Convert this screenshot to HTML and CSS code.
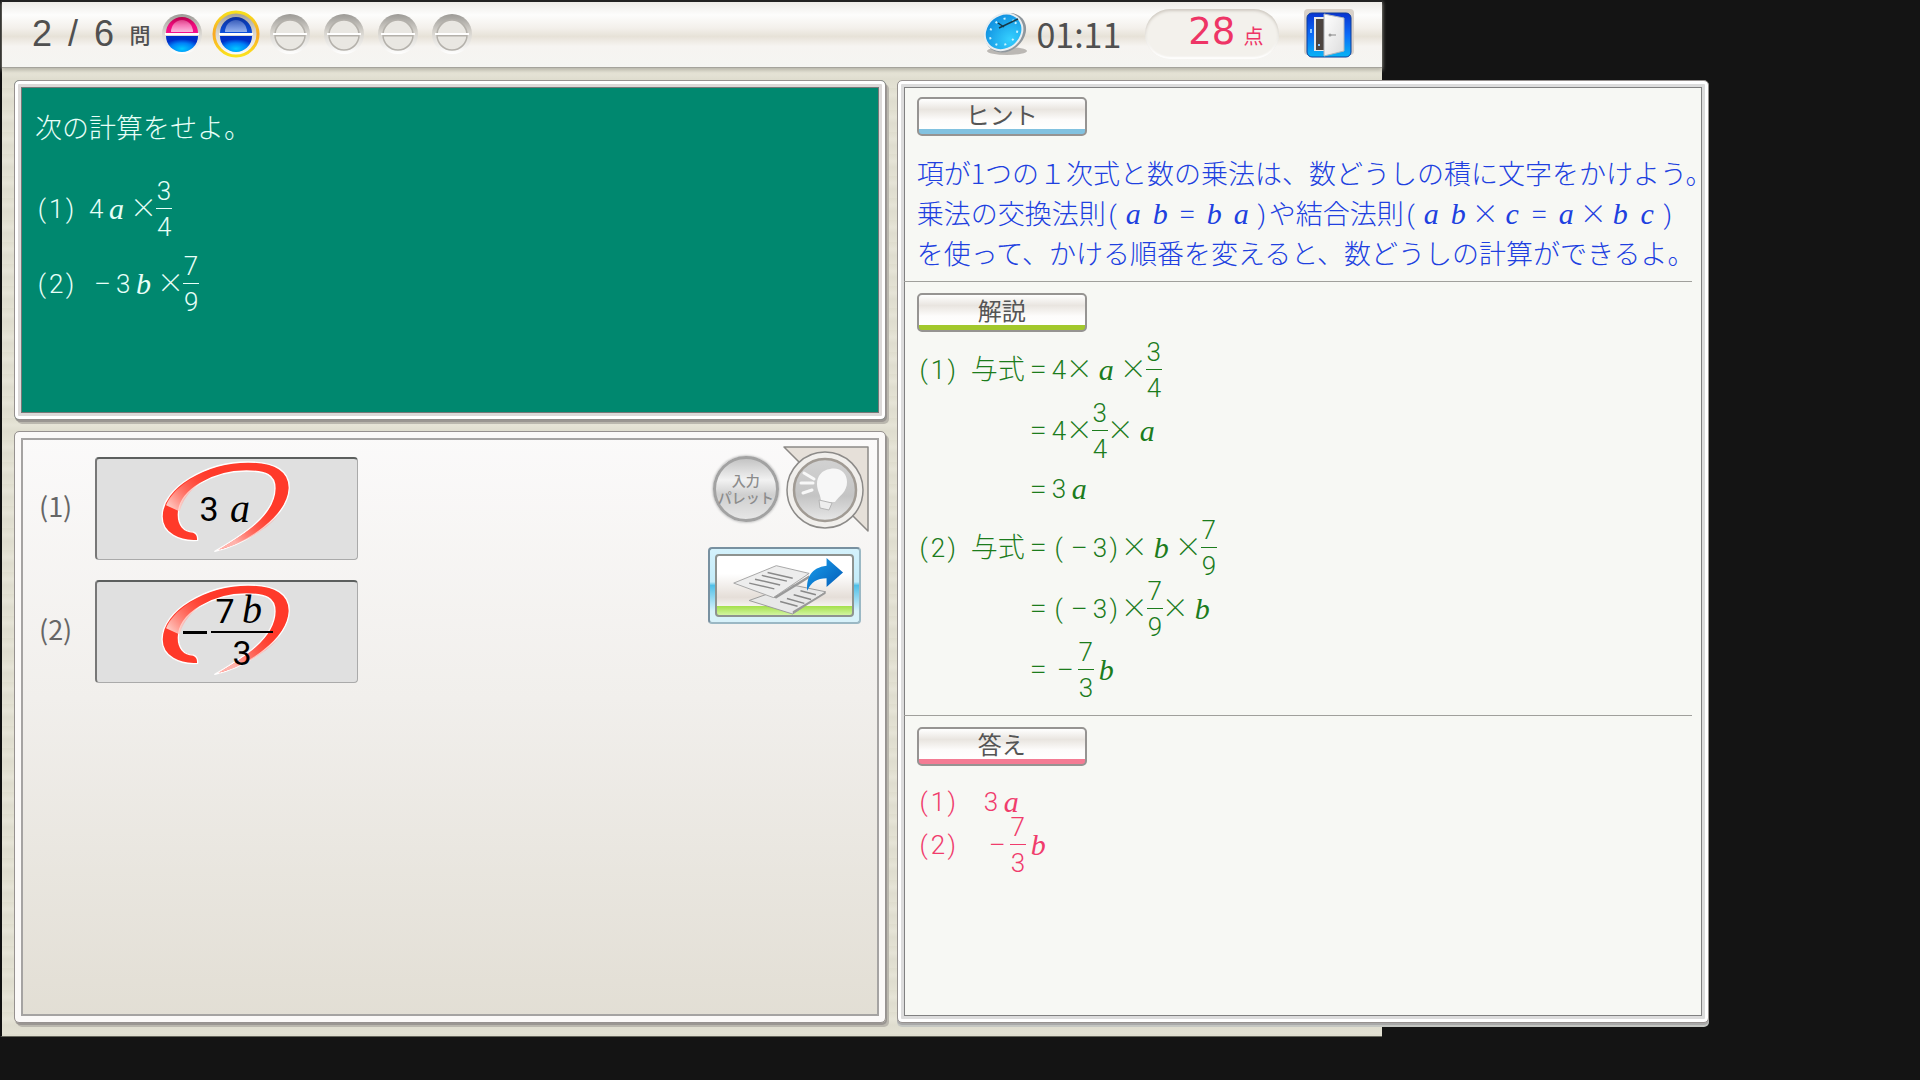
FILE: index.html
```html
<!DOCTYPE html>
<html lang="ja">
<head>
    <meta charset="UTF-8">
    <meta name="viewport" content="width=device-width, initial-scale=1.0">
    <title>計算ドリル</title>
    <link rel="stylesheet" href="styles.css">
</head>
<body>
    <!-- shared shapes -->
    <svg class="defs" width="0" height="0" aria-hidden="true">
        <defs>
            <linearGradient id="pink" x1="0" y1="0" x2="0" y2="1">
                <stop offset="0" stop-color="#b8004c"/>
                <stop offset="0.5" stop-color="#ee0a7c"/>
                <stop offset="1" stop-color="#f5108c"/>
            </linearGradient>
            <linearGradient id="blue" x1="0" y1="0" x2="0" y2="1">
                <stop offset="0" stop-color="#0a2f9c"/>
                <stop offset="1" stop-color="#0c50dc"/>
            </linearGradient>
            <radialGradient id="blueLow" cx="0.5" cy="0.8" r="0.6">
                <stop offset="0" stop-color="#00c8ff"/>
                <stop offset="0.6" stop-color="#0080f8"/>
                <stop offset="1" stop-color="#0030c8"/>
            </radialGradient>
            <linearGradient id="shine" x1="0" y1="0" x2="0" y2="1">
                <stop offset="0" stop-color="#fff" stop-opacity="0.25"/>
                <stop offset="1" stop-color="#fff" stop-opacity="0.7"/>
            </linearGradient>
            <linearGradient id="socket" x1="0" y1="0" x2="0" y2="1">
                <stop offset="0" stop-color="#9c9a96"/>
                <stop offset="0.45" stop-color="#d6d3cd"/>
                <stop offset="1" stop-color="#ffffff"/>
            </linearGradient>
            <linearGradient id="gold" x1="0" y1="0" x2="0" y2="1">
                <stop offset="0" stop-color="#f7e01c"/>
                <stop offset="0.5" stop-color="#f9a825"/>
                <stop offset="1" stop-color="#fbe31e"/>
            </linearGradient>
            <linearGradient id="fadeTop" gradientUnits="userSpaceOnUse" x1="510" y1="325" x2="640" y2="215">
                <stop offset="0" stop-color="#ffd8d2" stop-opacity="0.9"/>
                <stop offset="1" stop-color="#ff3a2a" stop-opacity="0"/>
            </linearGradient>
            <linearGradient id="fadeTail" gradientUnits="userSpaceOnUse" x1="700" y1="420" x2="820" y2="315">
                <stop offset="0" stop-color="#ffc0ba" stop-opacity="0.9"/>
                <stop offset="1" stop-color="#ff3a2a" stop-opacity="0"/>
            </linearGradient>
        </defs>
        <symbol id="empty" viewBox="0 0 48 48">
            <circle cx="24" cy="24" r="20" fill="url(#socket)"/>
            <circle cx="24" cy="25" r="15" fill="#e9e7e2" stroke="#b4b1ab" stroke-width="1.5"/>
            <path d="M9 25h30" stroke="#b4b1ab" stroke-width="3"/>
            <path d="M7 24h34" stroke="#fff" stroke-width="2"/>
        </symbol>
        <symbol id="maru" viewBox="480 180 400 280">
            <path d="M593 422C540 426 486 402 486 350C486 262 620 186 745 186C830 186 870 215 869 265C865 350 740 434 645 455C720 410 825 350 826 265C826 225 800 213 740 213C640 213 535 270 535 345C535 375 550 396 580 397Q595 402 593 422Z" fill="#ff3a2a" stroke="#fff" stroke-width="4" stroke-linejoin="round"/>
            <path d="M498 316C520 262 590 222 650 200L670 219C610 232 555 275 539 335Z" fill="url(#fadeTop)"/>
            <path d="M847 335C800 395 720 434 654 451C720 412 790 365 815 320Z" fill="url(#fadeTail)"/>
        </symbol>
    </svg>

    <div class="app">
        <header>
            <div class="progress">
                <div class="count"><span>2</span><span>/</span><span>6</span></div>
                <span class="unit">問</span>
                <svg class="ball" viewBox="0 0 48 48">
                    <circle cx="24" cy="24" r="20" fill="url(#socket)"/>
                    <path d="M8 23a16 16 0 0 1 32 0z" fill="url(#pink)"/>
                    <path d="M8 26a16 16 0 0 0 32 0z" fill="url(#blueLow)"/>
                    <path d="M13 22a11 12 0 0 1 22 0z" fill="url(#shine)"/>
                    <path d="M7 24h34" stroke="#fff" stroke-width="2"/>
                </svg>
                <svg class="ball" viewBox="0 0 48 48">
                    <circle cx="24" cy="24" r="22" fill="url(#socket)" stroke="url(#gold)" stroke-width="3"/>
                    <path d="M8 23a16 16 0 0 1 32 0z" fill="url(#blue)"/>
                    <path d="M8 26a16 16 0 0 0 32 0z" fill="url(#blueLow)"/>
                    <path d="M13 22a11 12 0 0 1 22 0z" fill="url(#shine)" opacity="0.8"/>
                    <path d="M7 24h34" stroke="#fff" stroke-width="2"/>
                </svg>
                <svg class="ball"><use href="#empty"/></svg>
                <svg class="ball"><use href="#empty"/></svg>
                <svg class="ball"><use href="#empty"/></svg>
                <svg class="ball"><use href="#empty"/></svg>
            </div>
            <div class="status">
                <svg class="clock" viewBox="0 0 44 46">
                    <defs>
                        <radialGradient id="dial" cx="0.5" cy="0.8" r="0.8">
                            <stop offset="0" stop-color="#35d0ff"/>
                            <stop offset="1" stop-color="#1090e0"/>
                        </radialGradient>
                    </defs>
                    <ellipse cx="23" cy="40" rx="20" ry="4" fill="#bbb8b4"/>
                    <g transform="rotate(-40 21 21)">
                        <ellipse cx="21" cy="22" rx="22" ry="18" fill="#8f979d"/>
                        <ellipse cx="20" cy="20" rx="21" ry="18" fill="#e8edf0"/>
                        <ellipse cx="20" cy="20" rx="19" ry="16" fill="url(#dial)"/>
                        <ellipse cx="20" cy="20" rx="15" ry="12" fill="none" stroke="#c8f2ff" stroke-width="2" stroke-dasharray="2 7"/>
                    </g>
                    <path d="M14 12l6 4M15 17l19-9" stroke="#153848" stroke-width="1.5"/>
                </svg>
                <span class="time">01:11</span>
                <div class="score"><strong>28</strong><span>点</span></div>
                <button class="exit" type="button" aria-label="終了">
                    <svg viewBox="0 0 50 50">
                        <defs>
                            <linearGradient id="exitBg" x1="0" y1="0" x2="0" y2="1">
                                <stop offset="0" stop-color="#0a34d0"/>
                                <stop offset="0.5" stop-color="#0a6cf8"/>
                                <stop offset="1" stop-color="#08b4f4"/>
                            </linearGradient>
                            <linearGradient id="doorBg" x1="0" y1="0" x2="1" y2="1">
                                <stop offset="0" stop-color="#fff"/>
                                <stop offset="1" stop-color="#dcdcdc"/>
                            </linearGradient>
                        </defs>
                        <rect width="50" height="46" rx="4" fill="#d8d1c9"/>
                        <rect x="3" y="4" width="44" height="44" rx="5" fill="url(#exitBg)" stroke="#0c3c9c"/>
                        <path d="M10 8h27v34H10z" fill="#e8e8e8"/>
                        <path d="M12 10h10v31H12z" fill="#4c4440"/>
                        <path d="M20 5l20 4v33l-20 5z" fill="url(#doorBg)" stroke="#aeb4bc"/>
                        <path d="M26 26h6" stroke="#888" stroke-width="1"/>
                        <circle cx="26" cy="26" r="1.5" fill="#999"/>
                        <path d="M7 20v4M15 35v2" stroke="#8cc8ff" stroke-width="2"/>
                    </svg>
                </button>
            </div>
        </header>

        <main>
            <div class="left">
                <section class="panel board">
                    <p class="lead">次の計算をせよ。</p>
                    <div class="line">
                        <span class="no"><b>(</b><b>1</b><b>)</b></span><b>4</b><i>a</i><span class="op">×</span><span class="frac"><b>3</b><b>4</b></span>
                    </div>
                    <div class="line">
                        <span class="no"><b>(</b><b>2</b><b>)</b></span><span class="op">−</span><b>3</b><i>b</i><span class="op">×</span><span class="frac"><b>7</b><b>9</b></span>
                    </div>
                </section>

                <section class="panel work">
                    <div class="answers">
                        <div class="row">
                            <span class="row-no">(1)</span>
                            <div class="box">
                                <svg class="maru"><use href="#maru"/></svg>
                                <div class="value"><b>3</b><i>a</i></div>
                            </div>
                        </div>
                        <div class="row">
                            <span class="row-no">(2)</span>
                            <div class="box">
                                <svg class="maru"><use href="#maru"/></svg>
                                <div class="value">
                                    <span class="minus"></span>
                                    <span class="big-frac">
                                        <span><b>7</b><i>b</i></span>
                                        <span><b>3</b></span>
                                    </span>
                                </div>
                            </div>
                        </div>
                    </div>
                    <div class="tools">
                        <div class="tool-row">
                            <button class="palette" type="button"><span>入力</span><span>パレット</span></button>
                            <button class="bulb" type="button" aria-label="ヒント">
                                <svg viewBox="0 0 86 86">
                                    <defs>
                                        <linearGradient id="disc" x1="0" y1="0" x2="0" y2="1">
                                            <stop offset="0" stop-color="#d2d2d2"/>
                                            <stop offset="0.6" stop-color="#c4c4c4"/>
                                            <stop offset="1" stop-color="#e8e8e8"/>
                                        </linearGradient>
                                    </defs>
                                    <path d="M1 1h84v84z" fill="#e6e0d9" stroke="#8c8986" stroke-width="1.5" stroke-linejoin="round"/>
                                    <circle cx="42" cy="44" r="38" fill="#f1efec" stroke="#8c8a88" stroke-width="1.5"/>
                                    <circle cx="42" cy="44" r="31" fill="url(#disc)" stroke="#a19b94" stroke-width="2.5"/>
                                    <path d="M47 23c10-2 17 4 17 13 0 10-7 13-12 20h-14c0-7-4-11-4-18 0-8 5-14 13-15z" fill="#f7f7f7"/>
                                    <path d="M36 54l13 3-3 7-9-2z" fill="#eee" stroke="#b5b5b5"/>
                                    <path d="M21 27l10 6M18 37h12M20 47l9-3" stroke="#f8f8f8" stroke-width="3" stroke-linecap="round"/>
                                </svg>
                            </button>
                        </div>
                        <button class="submit" type="button" aria-label="提出">
                            <svg viewBox="0 0 137 61">
                                <defs>
                                    <linearGradient id="arrow" x1="0" y1="0" x2="1" y2="1">
                                        <stop offset="0" stop-color="#18a0ee"/>
                                        <stop offset="1" stop-color="#0458b4"/>
                                    </linearGradient>
                                </defs>
                                <path d="M32 46l45-16 34 7-34 23z" fill="#e8e8e8" stroke="#999"/>
                                <path d="M77 60l34-21v-2L77 57z" fill="#999"/>
                                <path d="M64 47l18 5M71 44l18 5M78 40l18 5M85 36l16 4" stroke="#888" stroke-width="1.5"/>
                                <path d="M16 28l44-18 34 8-37 25z" fill="#ededed" stroke="#a5a5a5"/>
                                <path d="M57 43l37-23v3L60 44z" fill="#999"/>
                                <path d="M32 28l26 6M38 24l26 6M45 20l26 6M51 17l26 6" stroke="#8a8a8a" stroke-width="1.5"/>
                                <path d="M92 36c-1-14 4-24 20-26V2l17 15-17 15v-9c-10 0-16 4-20 13z" fill="url(#arrow)"/>
                            </svg>
                        </button>
                    </div>
                </section>
            </div>

            <aside class="panel guide">
                <section class="hint">
                    <h2>ヒント</h2>
                    <p>項が1つの１次式と数の乗法は、数どうしの積に文字をかけよう。</p>
                    <p>乗法の交換法則<b>(</b><i>a</i><i>b</i><span class="op">=</span><i>b</i><i>a</i><b>)</b>や結合法則<b>(</b><i>a</i><i>b</i><span class="op">×</span><i>c</i><span class="op">=</span><i>a</i><span class="op">×</span><i>b</i><i>c</i><b>)</b></p>
                    <p>を使って、かける順番を変えると、数どうしの計算ができるよ。</p>
                </section>
                <section class="explain">
                    <h2>解説</h2>
                    <div class="line">
                        <span class="no"><b>(</b><b>1</b><b>)</b></span><span class="given">与式</span><span class="op">=</span><b>4</b><span class="op">×</span><i>a</i><span class="op">×</span><span class="frac"><b>3</b><b>4</b></span>
                    </div>
                    <div class="line step">
                        <span class="op">=</span><b>4</b><span class="op">×</span><span class="frac"><b>3</b><b>4</b></span><span class="op">×</span><i>a</i>
                    </div>
                    <div class="line step plain">
                        <span class="op">=</span><b>3</b><i>a</i>
                    </div>
                    <div class="line">
                        <span class="no"><b>(</b><b>2</b><b>)</b></span><span class="given">与式</span><span class="op">=</span><b>(</b><span class="op">−</span><b>3</b><b>)</b><span class="op">×</span><i>b</i><span class="op">×</span><span class="frac"><b>7</b><b>9</b></span>
                    </div>
                    <div class="line step">
                        <span class="op">=</span><b>(</b><span class="op">−</span><b>3</b><b>)</b><span class="op">×</span><span class="frac"><b>7</b><b>9</b></span><span class="op">×</span><i>b</i>
                    </div>
                    <div class="line step">
                        <span class="op">=</span><span class="op">−</span><span class="frac"><b>7</b><b>3</b></span><i>b</i>
                    </div>
                </section>
                <section class="result">
                    <h2>答え</h2>
                    <div class="line">
                        <span class="no"><b>(</b><b>1</b><b>)</b></span><b>3</b><i>a</i>
                    </div>
                    <div class="line">
                        <span class="no"><b>(</b><b>2</b><b>)</b></span><span class="op">−</span><span class="frac"><b>7</b><b>3</b></span><i>b</i>
                    </div>
                </section>
            </aside>
        </main>
    </div>
</body>
</html>
```
FILE: styles.css
```css
*{
    padding: 0;
    margin: 0;
    box-sizing: border-box;
}
body{
    background: #141414;
    font-family: "Noto Sans CJK JP", sans-serif;
    font-size: 27px;
    font-weight: 300;
}
button{
    border: none;
    background: none;
    font-family: inherit;
    cursor: pointer;
}
svg{
    display: block;
}
.defs{
    position: absolute;
}
.app{
    display: flex;
    flex-direction: column;
    width: 72vw;
    min-height: 96vh;
    border-left: 2px solid #111;
    border-bottom: 1px solid #66665c;
    background: repeating-linear-gradient(#dfddce 0, #e6e4d7 7px, #dfddcf 13px, #e3e1d3 22px);
}

/* top bar */
header{
    display: flex;
    justify-content: space-between;
    align-items: center;
    height: 68px;
    padding: 0 28px 2px 30px;
    border-top: 2px solid #222;
    border-bottom: 1px solid #a5a39c;
    background: linear-gradient(#eeece8, #fdfdfc 20%, #f3f0eb 40%, #e7e2d8 53%, #f6f4f1 68%, #f5f5f2);
    box-shadow: 0 2px 4px #b5b3a8;
    color: #505050;
}
.progress, .status{
    display: flex;
    align-items: center;
}
.count{
    display: flex;
    justify-content: space-between;
    width: 82px;
    margin-right: 8px;
    font-family: "Liberation Sans", sans-serif;
    font-size: 36px;
}
.unit{
    width: 36px;
    font-size: 21px;
    font-weight: 500;
    text-align: center;
}
.ball{
    width: 48px;
    height: 48px;
    margin-right: 6px;
}
.clock{
    width: 44px;
    height: 46px;
    margin-right: 8px;
}
.time{
    width: 109px;
    font-size: 34px;
    font-weight: 400;
    line-height: 46px;
}
.score{
    display: flex;
    justify-content: flex-end;
    align-items: baseline;
    width: 134px;
    height: 50px;
    margin-right: 25px;
    padding-right: 16px;
    border-radius: 25px;
    background: #f3f1ec;
    box-shadow: inset 0 2px 3px #cfcac2, inset 0 -2px 2px #fff;
    color: #ee3566;
    line-height: 46px;
}
.score strong{
    margin-right: 8px;
    font-family: "DejaVu Sans", sans-serif;
    font-size: 37px;
    font-weight: 400;
}
.score span{
    font-size: 20px;
    font-weight: 400;
}
.exit{
    width: 50px;
    height: 50px;
}
.status svg, .status .exit{
    flex: none;
}

/* frames */
main{
    display: flex;
    flex: 1;
    gap: 11px;
    padding: 12px 0 13px 12px;
}
.left{
    display: flex;
    flex: none;
    flex-direction: column;
    gap: 11px;
    width: 45.4vw;
}
.panel{
    padding: 8px;
    border: 1px solid #96918f;
    border-radius: 5px;
    box-shadow: inset 0 0 0 3px #fff, inset 0 0 0 6px #dcd9d8, inset 0 0 0 7px #777, 1px 2px 0 #9a9692, 3px 4px 0 #bab7ae;
}
.board{
    min-height: 340px;
    padding: 26px 20px 8px;
    background: #00886f;
    color: #e8fff8;
}
.work{
    display: flex;
    flex: 1;
    justify-content: space-between;
    align-items: flex-start;
    background: linear-gradient(#fbfafa, #f1efec 45%, #e2ded4);
    box-shadow: inset 0 0 0 6px #fbf9f8, inset 0 0 0 8px #a5a3a2, 1px 2px 0 #9a9692, 3px 4px 0 #bab7ae;
}
.guide{
    flex: none;
    width: 42.3vw;
    padding: 7px 6px;
    background: #f7f8f4;
    box-shadow: inset 0 0 0 3px #fff, inset 0 0 0 6px #dcdcdc, inset 0 0 0 7px #808080, 0 2px 0 #a9a9a9, 0 4px 0 #c4c6c2;
}

/* formulas: half-width cells for digits, full-width cells for the rest */
b, i, .op{
    display: inline-block;
    text-align: center;
    font-weight: inherit;
    line-height: 28px;
}
b{
    width: 14px;
    font-family: Roboto, sans-serif;
    font-size: 26px;
}
.op{
    width: 27px;
}
i{
    width: 27px;
    font-family: "Liberation Serif", serif;
    font-size: 30px;
}
.line{
    display: flex;
    align-items: center;
    height: 61px;
    line-height: 28px;
}
.line > .op, .given{
    padding-bottom: 3px;
}
.no{
    display: flex;
    width: 54px;
}
.frac{
    display: flex;
    flex-direction: column;
    align-items: center;
    width: 14px;
}
.frac b:first-child{
    width: 16px;
    height: 32px;
    border-bottom: 1px solid;
}
.frac b:last-child{
    height: 32px;
    padding-top: 4px;
}
.board .lead{
    margin-bottom: 24px;
    line-height: 40px;
}
.board .line{
    height: 75px;
}

/* answer area */
.answers{
    display: flex;
    flex-direction: column;
    gap: 20px;
    padding: 17px 0 0 16px;
}
.row{
    display: flex;
    align-items: center;
    color: #666;
}
.row-no{
    width: 56px;
    padding-bottom: 6px;
    font-weight: 400;
}
.box{
    position: relative;
    display: flex;
    justify-content: center;
    align-items: center;
    width: 263px;
    height: 103px;
    border: 1px solid #aaa;
    border-top: 2px solid #5c5f5e;
    border-left: 2px solid #777;
    border-radius: 4px;
    background: #e0e0e0;
    color: #000;
}
.maru{
    position: absolute;
    top: 1px;
    left: 63px;
    width: 133px;
    height: 93px;
}
.value{
    position: relative;
    display: flex;
    align-items: center;
    gap: 4px;
    padding-left: 2px;
    font-weight: 400;
}
.value b{
    width: 20px;
    font-size: 34px;
    line-height: 40px;
}
.value i{
    width: 34px;
    font-size: 40px;
    line-height: 40px;
}
.minus{
    width: 24px;
    height: 3px;
    background: #000;
}
.big-frac{
    display: flex;
    flex-direction: column;
    align-items: center;
    line-height: 40px;
}
.big-frac span:first-child{
    height: 43px;
    padding: 0 4px;
    border-bottom: 2px solid #000;
}

/* tools */
.tools{
    display: flex;
    flex-direction: column;
    align-items: flex-end;
    gap: 15px;
    padding: 6px 8px 0 0;
}
.tool-row{
    display: flex;
    align-items: center;
    gap: 4px;
}
.palette{
    display: flex;
    flex-direction: column;
    align-items: center;
    justify-content: center;
    width: 66px;
    height: 66px;
    border: 3px solid #a2a2a2;
    border-radius: 50%;
    background: linear-gradient(#c4c4c4, #f2f2f2 35%, #cfcfcf 60%, #e6e6e6);
    box-shadow: 0 0 2px 1px #ccc;
    color: #8c8c8c;
    font-size: 14px;
    font-weight: 500;
    line-height: 17px;
    white-space: nowrap;
}
.bulb{
    width: 86px;
    height: 86px;
}
.submit{
    width: 153px;
    height: 77px;
    margin-right: 8px;
    padding: 5px;
    border: 2px solid #7890a0;
    border-right-color: #9bb8c4;
    border-bottom-color: #9bb8c4;
    border-radius: 4px;
    background: linear-gradient(#d4f2fc, #c4ecf9 45%, #50c0e8 50%, #d8f2fa 85%);
}
.submit svg{
    width: 100%;
    height: 100%;
    border: 2px solid #8e9390;
    border-radius: 4px;
    background: linear-gradient(#fff 30%, #e5ded8 70%, #f5f2ee 84%, #a5e04c 85%, #d2f5a0);
}

/* hint, explanation and answer */
h2{
    width: 170px;
    height: 39px;
    border: 2px solid #969492;
    border-radius: 5px;
    color: #555;
    font-size: 24px;
    font-weight: 400;
    line-height: 30px;
    text-align: center;
}
.guide section{
    margin-right: 10px;
    padding: 11px 0 15px 13px;
    border-bottom: 1px solid #a0a09c;
    white-space: nowrap;
}
.guide .hint{
    padding: 9px 0 8px 13px;
    color: #2040e0;
}
.hint h2{
    margin-bottom: 17px;
    background: linear-gradient(#fff, #e9e5e0 30%, #fdfcfb 60%, #fff 86%, #82c2e0 87%);
}
.hint p{
    height: 40px;
    line-height: 40px;
}
.explain{
    color: #1c7c1c;
}
.explain h2{
    margin-bottom: 7px;
    background: linear-gradient(#fff, #e9e5e0 30%, #fdfcfb 60%, #fff 86%, #a2c82c 87%);
}
.explain .step{
    padding-left: 108px;
}
.explain .plain{
    height: 56px;
}
.guide .result{
    border-bottom: none;
    color: #f03c6c;
}
.result h2{
    margin-bottom: 14px;
    background: linear-gradient(#fff, #e9e5e0 30%, #fdfcfb 60%, #fff 86%, #f47c94 87%);
}
.result .line{
    height: 43px;
}
.result .no{
    width: 67px;
}
```
